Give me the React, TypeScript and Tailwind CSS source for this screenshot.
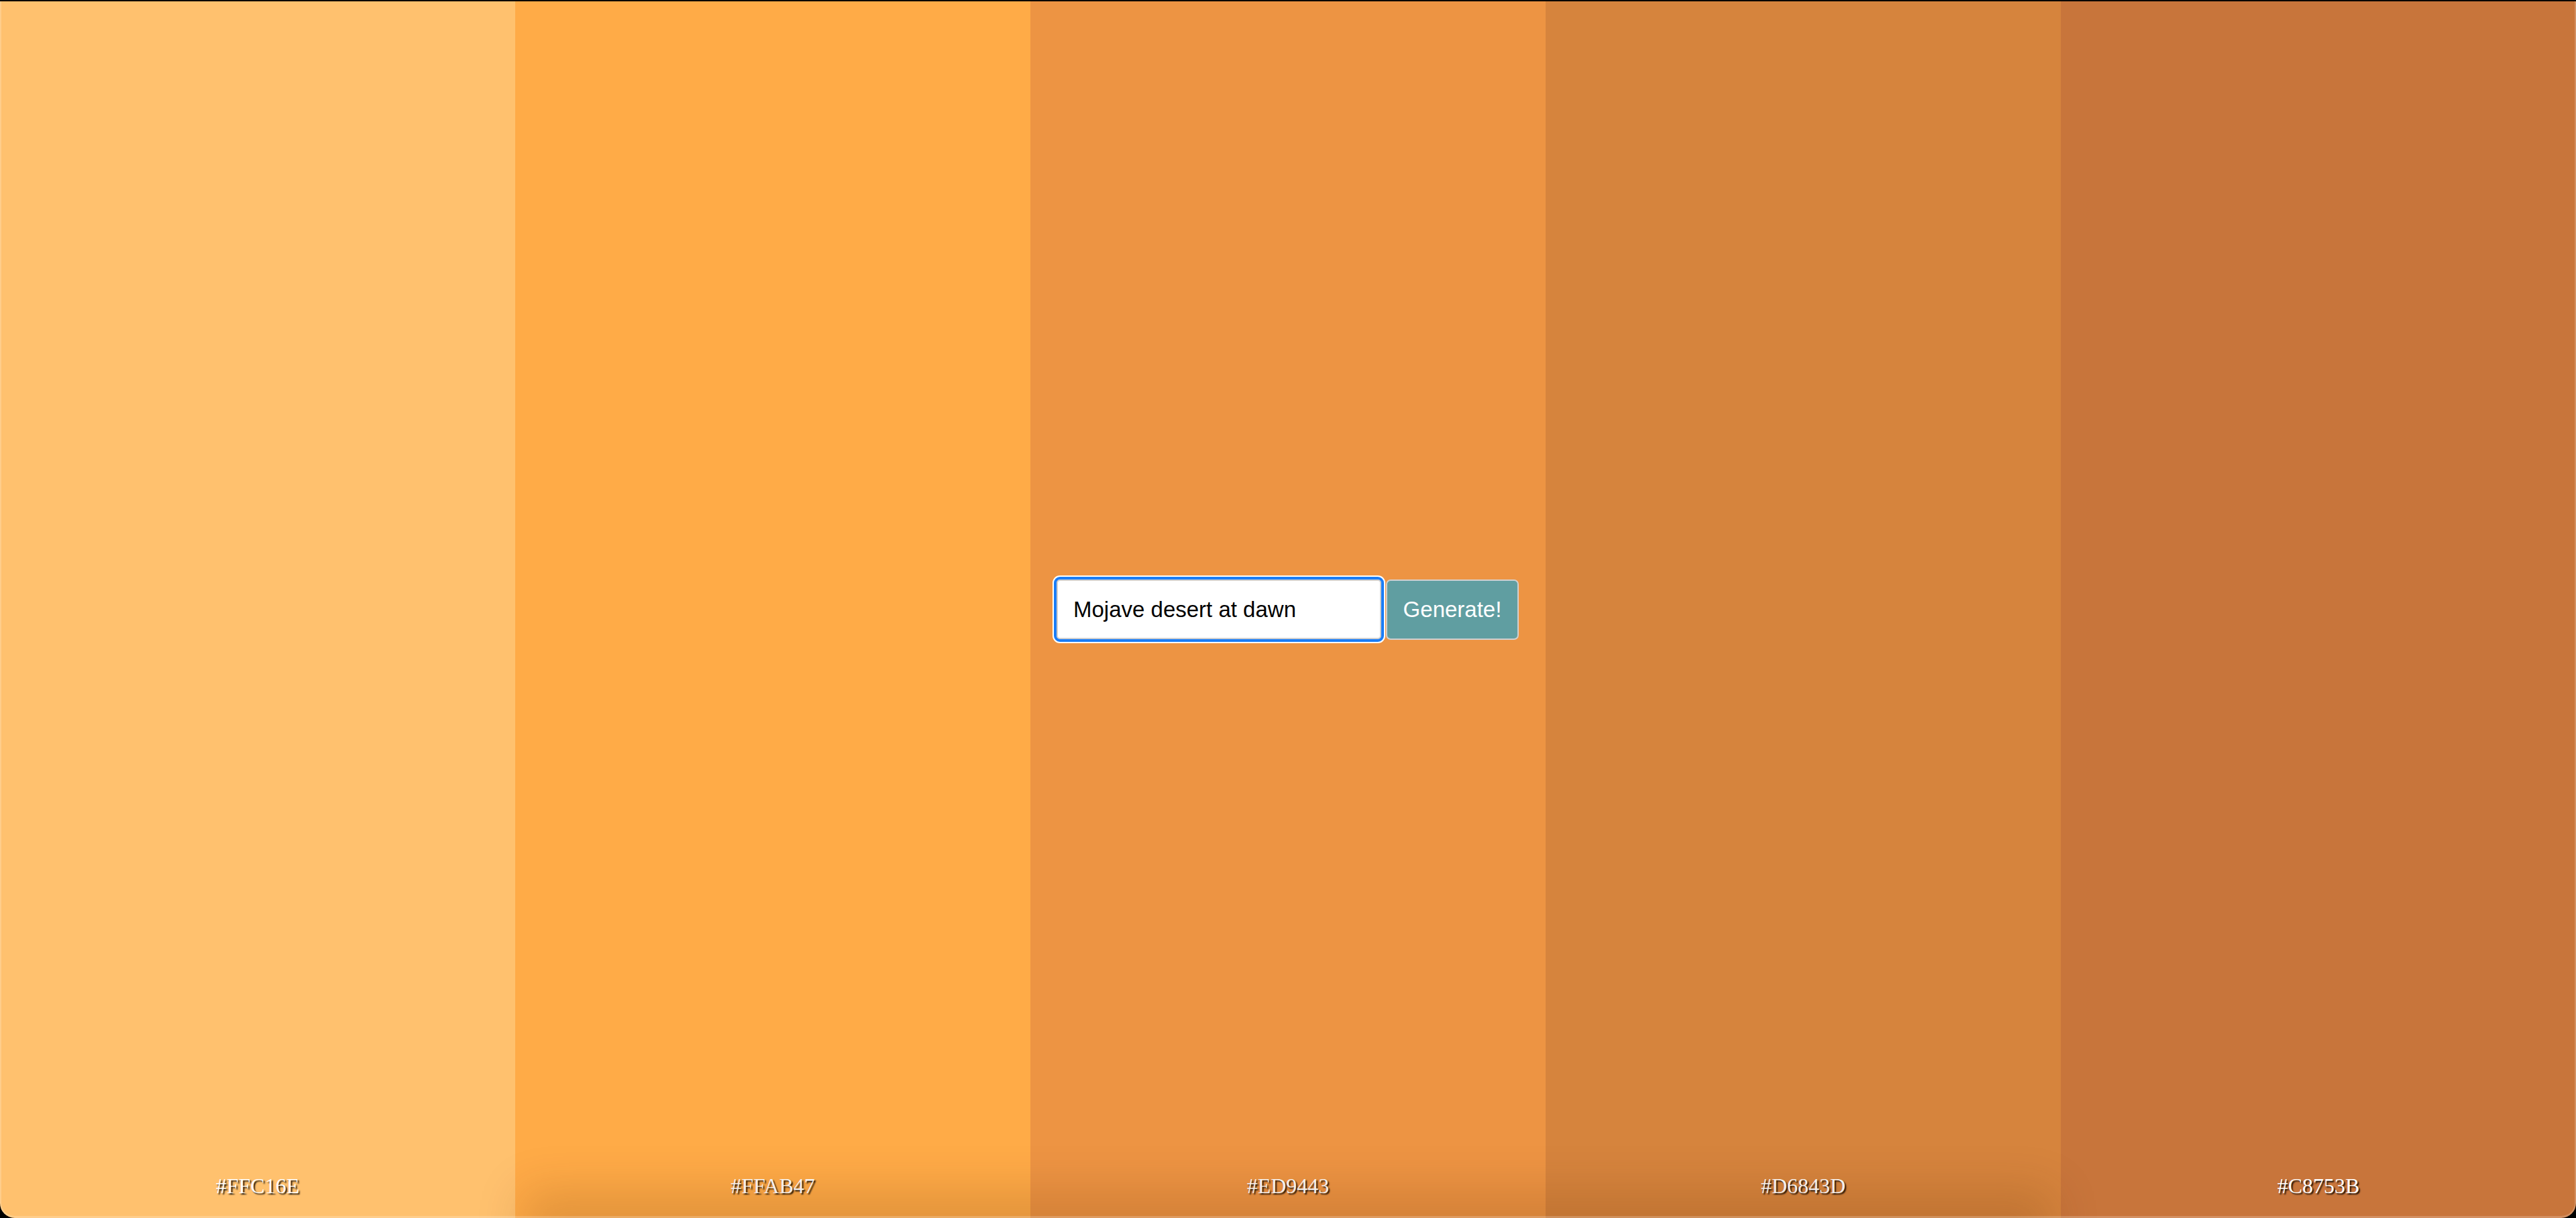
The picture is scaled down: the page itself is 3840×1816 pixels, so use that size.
const COLORS = ['#FFC16E', '#FFAB47', '#ED9443', '#D6843D', '#C8753B']

const SWATCH_BG: Record<string, string> = {
  '#FFC16E': 'bg-[#ffc16e]',
  '#FFAB47': 'bg-[#ffab47]',
  '#ED9443': 'bg-[#ed9443]',
  '#D6843D': 'bg-[#d6843d]',
  '#C8753B': 'bg-[#c8753b]',
}

function Swatch({ hex }: { hex: string }) {
  return (
    <div className={`flex-1 flex flex-col justify-end items-center pb-[29px] ${SWATCH_BG[hex]}`}>
      <span className="text-white text-[32px] leading-[37px] [font-family:'Liberation_Serif',serif] [text-shadow:2px_2px_2px_rgba(0,0,0,0.9)]">
        {hex}
      </span>
    </div>
  )
}

export default function App() {
  return (
    <div className="w-[3840px] h-[1816px] bg-black pt-[2px] overflow-hidden">
      <div className="relative h-full flex rounded-b-[22px] overflow-hidden">
        {COLORS.map((c) => (
          <Swatch key={c} hex={c} />
        ))}

        {/* soft shadow pooling at the bottom edge */}
        <div className="absolute left-[820px] right-[820px] bottom-[-10px] h-[10px] shadow-[0_0_70px_40px_rgba(90,40,0,0.18)] pointer-events-none" />

        {/* window edge highlight */}
        <div className="absolute inset-0 border-x-2 border-b-[3px] border-white/20 rounded-b-[22px] pointer-events-none" />

        <form
          className="absolute left-[1569px] top-[856px] flex items-center gap-[1px] [font-family:'Liberation_Sans',Arial,sans-serif]"
          onSubmit={(e) => e.preventDefault()}
        >
          <div className="p-[2px] bg-white rounded-[11px]">
            <input
              defaultValue="Mojave desert at dawn"
              className="w-[492px] h-[97px] rounded-[9px] border-[4px] border-[#1a7df7] bg-white pl-[25px] text-[33px] text-black outline-none shadow-[inset_0_0_0_2px_#cfcfcf]"
            />
          </div>
          <button
            type="submit"
            className="w-[198px] h-[90px] rounded-[7px] border-2 border-[#d0d0d0] bg-[#609ea1] text-white text-[33px]"
          >
            Generate!
          </button>
        </form>
      </div>
    </div>
  )
}
